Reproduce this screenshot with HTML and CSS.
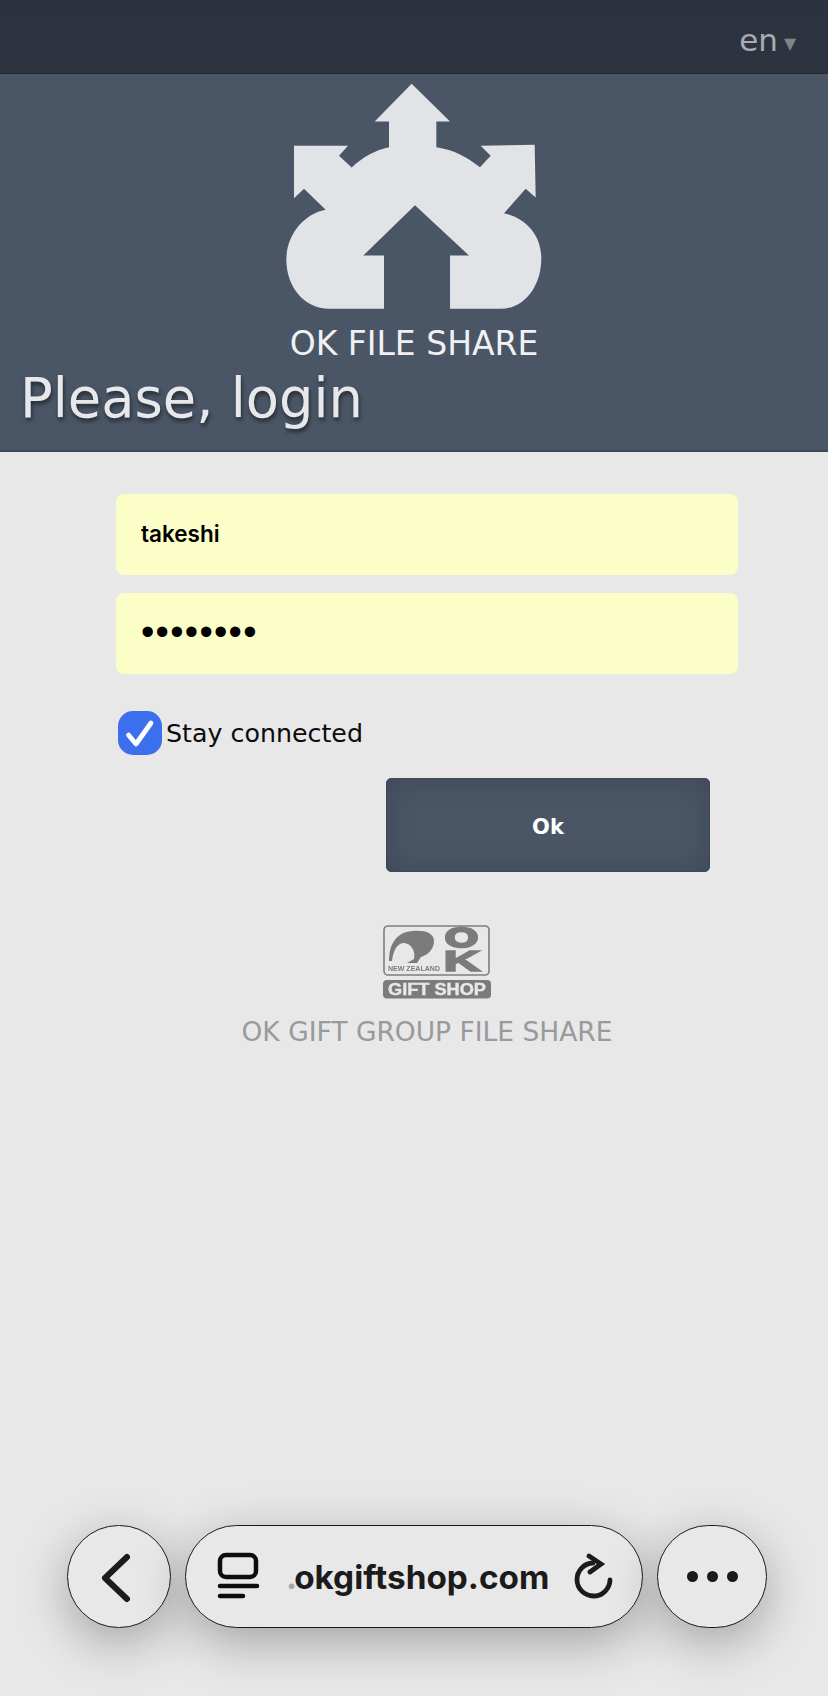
FILE: index.html
```html
<!DOCTYPE html>
<html lang="en">
<head>
<meta charset="utf-8">
<title>OK File Share</title>
<link rel="stylesheet" href="styles.css">
</head>
<body>
<div class="page">
  <header class="topbar">
    <span class="lang">en</span><span class="caret">▾</span>
  </header>
  <section class="banner">
    <svg class="share-logo" viewBox="40 40 780 680" aria-hidden="true">
      <path fill="#e2e3e7" d="M423 42L538 155H497V232C550 240 590 262 628 292L660 258L630 228L792 225L795 383L765 357L700 430C765 445 812 495 812 565C812 650 760 717 690 717H538V557H595L433 406L278 557H340V717H175C100 717 47 650 47 570C47 495 100 432 165 420L100 357L70 385V228H232L205 258L243 293C275 262 315 240 355 232V155H312Z"/>
    </svg>
    <div class="share-name">OK FILE SHARE</div>
    <h1 class="title">Please, login</h1>
  </section>
  <form class="login">
    <input class="field field-user" type="text" value="takeshi">
    <input class="field field-pass" type="password" value="password">
    <label class="stay">
      <span class="check">
        <svg viewBox="0 0 44 44" class="check-mark" aria-hidden="true"><path d="M10.500 24L18 33L33 12"/></svg>
      </span>
      <span class="stay-text">Stay connected</span>
    </label>
    <div class="actions"><button class="ok" type="button">Ok</button></div>
  </form>
  <footer class="brand">
    <svg class="gift-logo" viewBox="0 0 108 74" aria-hidden="true">
      <rect class="gl-box" x="1" y="1" width="105" height="49" rx="4"/>
      <path class="gl-fill" d="M6 36C6 18 14 7 30 6C42 5 51 8 51 16C51 24 45 30 38 32L34 38L24 38L31 34C33 27 28 18 21 18C14 18 10 26 9 36Z"/>
      <text class="gl-small" x="5" y="46" textLength="52" lengthAdjust="spacingAndGlyphs">NEW ZEALAND</text>
      <text class="gl-ok" x="78.500" y="22" text-anchor="middle" textLength="33" lengthAdjust="spacingAndGlyphs">O</text>
      <text class="gl-ok gl-k" x="79" y="46" text-anchor="middle" textLength="37" lengthAdjust="spacingAndGlyphs">K</text>
      <rect class="gl-fill" x="0" y="55" width="108" height="18.500" rx="4"/>
      <text class="gl-shop" x="54" y="69.500" text-anchor="middle" textLength="98" lengthAdjust="spacingAndGlyphs">GIFT SHOP</text>
    </svg>
    <div class="brand-name">OK GIFT GROUP FILE SHARE</div>
  </footer>
  <nav class="browserbar">
    <button class="pill round back" type="button" aria-label="Back">
      <svg viewBox="0 0 104 104" aria-hidden="true"><path d="M60 32L38 53L60 74"/></svg>
    </button>
    <div class="pill address">
      <svg class="tabs" viewBox="0 0 44 48" aria-hidden="true">
        <rect x="4" y="3" width="36" height="22" rx="6"/>
        <path d="M4 34H41M4 44H27"/>
      </svg>
      <span class="url"><span class="dot">.</span>okgiftshop.com</span>
      <svg class="reload" viewBox="0 0 44 48" aria-hidden="true">
        <path d="M21 10A16.500 16.500 0 1 0 38 27"/>
        <path d="M17 3L29 11L18 19"/>
      </svg>
    </div>
    <button class="pill round more" type="button" aria-label="More">
      <span class="dots"><i></i><i></i><i></i></span>
    </button>
  </nav>
</div>
</body>
</html>
```
FILE: styles.css
```css
* { box-sizing: border-box; }
html, body { margin: 0; padding: 0; }
body { background: #e8e8e9; font-family: "DejaVu Sans", sans-serif; }
.page { position: relative; width: 828px; height: 1696px; overflow: hidden; }

.topbar {
  height: 74px;
  background: linear-gradient(#2c333e, #2d3440);
  border-bottom: 1px solid #242a33;
  display: flex;
  justify-content: flex-end;
  align-items: baseline;
  padding: 18px 32px 0 0;
}
.lang { font-size: 31px; line-height: 44px; color: #a8acb3; }
.caret { font-size: 24px; color: #80858b; margin-left: 6px; }

.banner {
  height: 378px;
  background: #4a5666;
  border-bottom: 2px solid #3d4755;
  padding-top: 9px;
  display: flex;
  flex-direction: column;
  align-items: center;
}
.share-logo { display: block; width: 260px; height: 227px; flex: none; }
.share-name { margin-top: 14px; font-size: 33px; line-height: 40px; color: #f0f1f4; }
.title {
  align-self: flex-start;
  margin: 5px 0 0 20px;
  font-size: 54.300px;
  line-height: 60px;
  font-weight: 400;
  color: #e6e8ec;
  text-shadow: 1px 3px 4px rgba(0, 0, 0, .55);
}

.login { width: 622px; margin: 42px 0 0 116px; display: flex; flex-direction: column; }
.field {
  display: block;
  width: 622px;
  height: 81px;
  border: 0;
  border-radius: 8px;
  background: #fbfec6;
  padding: 0 25px;
  color: #000;
  outline: none;
}
.field-user { font-family: Inter, sans-serif; font-size: 22.500px; font-weight: 600; padding-bottom: 2px; }
.field-pass { margin-top: 18px; font-family: "Liberation Sans", sans-serif; font-size: 38px; letter-spacing: 1.300px; padding-bottom: 2px; }
.stay {
  display: flex;
  align-items: center;
  height: 44px;
  margin: 37px 0 0 2px;
  font-size: 25.300px;
  line-height: 40px;
  color: #0c0c0c;
}
.stay-text { margin-top: 2px; }
.check {
  width: 44px;
  height: 44px;
  border-radius: 15px;
  background: #3b6fee;
  margin-right: 4px;
  flex: none;
}
.check-mark { display: block; width: 44px; height: 44px; }
.check-mark path { fill: none; stroke: #fff; stroke-width: 4.800; stroke-linecap: round; stroke-linejoin: round; }
.actions { display: flex; margin-top: 23px; padding-left: 270px; }
.ok {
  width: 324px;
  height: 94px;
  border: 1px solid #3e4958;
  border-radius: 5px;
  background: #4a5666;
  box-shadow: inset 0 0 28px rgba(30, 38, 50, .28);
  color: #fff;
  font-family: "DejaVu Sans", sans-serif;
  font-size: 21px;
  font-weight: 700;
  padding: 4px 0 0;
}

.brand { display: flex; flex-direction: column; align-items: center; width: 622px; margin: 53px 0 0 116px; }
.gift-logo { display: block; width: 108px; height: 74px; margin-left: 19px; overflow: visible; filter: blur(.4px); }
.gl-box { fill: none; stroke: #7d7d7d; stroke-width: 1.600; }
.gl-fill { fill: #7b7b7b; }
.gl-small { font: 700 6.500px "Liberation Sans", sans-serif; fill: #7b7b7b; }
.gl-ok { font: 700 27px "Liberation Sans", sans-serif; fill: #7b7b7b; stroke: #7b7b7b; stroke-width: 2.400; }
.gl-k { font-size: 29px; stroke-width: 1.600; }
.gl-shop { font: 700 16.500px "Liberation Sans", sans-serif; fill: #e8e8e8; stroke: #e8e8e8; stroke-width: .4; }
.brand-name { margin-top: 16px; font-size: 26.500px; line-height: 34px; color: #999a9b; white-space: nowrap; }

.browserbar { position: absolute; left: 67px; top: 1525px; display: flex; gap: 14px; }
.pill {
  height: 103px;
  background: #e8e8e9;
  border: 1.500px solid #1b1b1b;
  border-radius: 52px;
  box-shadow: 0 14px 50px rgba(0, 0, 0, .3);
  padding: 0;
}
.round { display: flex; align-items: center; justify-content: center; }
.back { width: 104px; }
.back svg { width: 104px; height: 104px; flex: none; }
.back path { fill: none; stroke: #1b1b1b; stroke-width: 6; stroke-linecap: round; stroke-linejoin: round; }
.address { width: 458px; display: flex; align-items: center; padding-left: 30px; }
.tabs { width: 44px; height: 48px; flex: none; margin-top: -2px; }
.tabs rect, .tabs path { fill: none; stroke: #0d0d0d; stroke-width: 4.500; stroke-linecap: round; }
.url { margin-left: 26px; font-family: Inter, sans-serif; font-size: 33.300px; font-weight: 700; color: #1b1b1b; white-space: nowrap; }
.dot { color: #a5a5a5; margin-right: -3px; }
.reload { width: 44px; height: 48px; margin-left: auto; margin-right: 26px; flex: none; }
.reload path { fill: none; stroke: #1b1b1b; stroke-width: 4.800; stroke-linecap: round; }
.more { width: 110px; }
.dots { display: flex; gap: 9px; }
.dots i { display: block; width: 11px; height: 11px; border-radius: 50%; background: #1b1b1b; }
```
